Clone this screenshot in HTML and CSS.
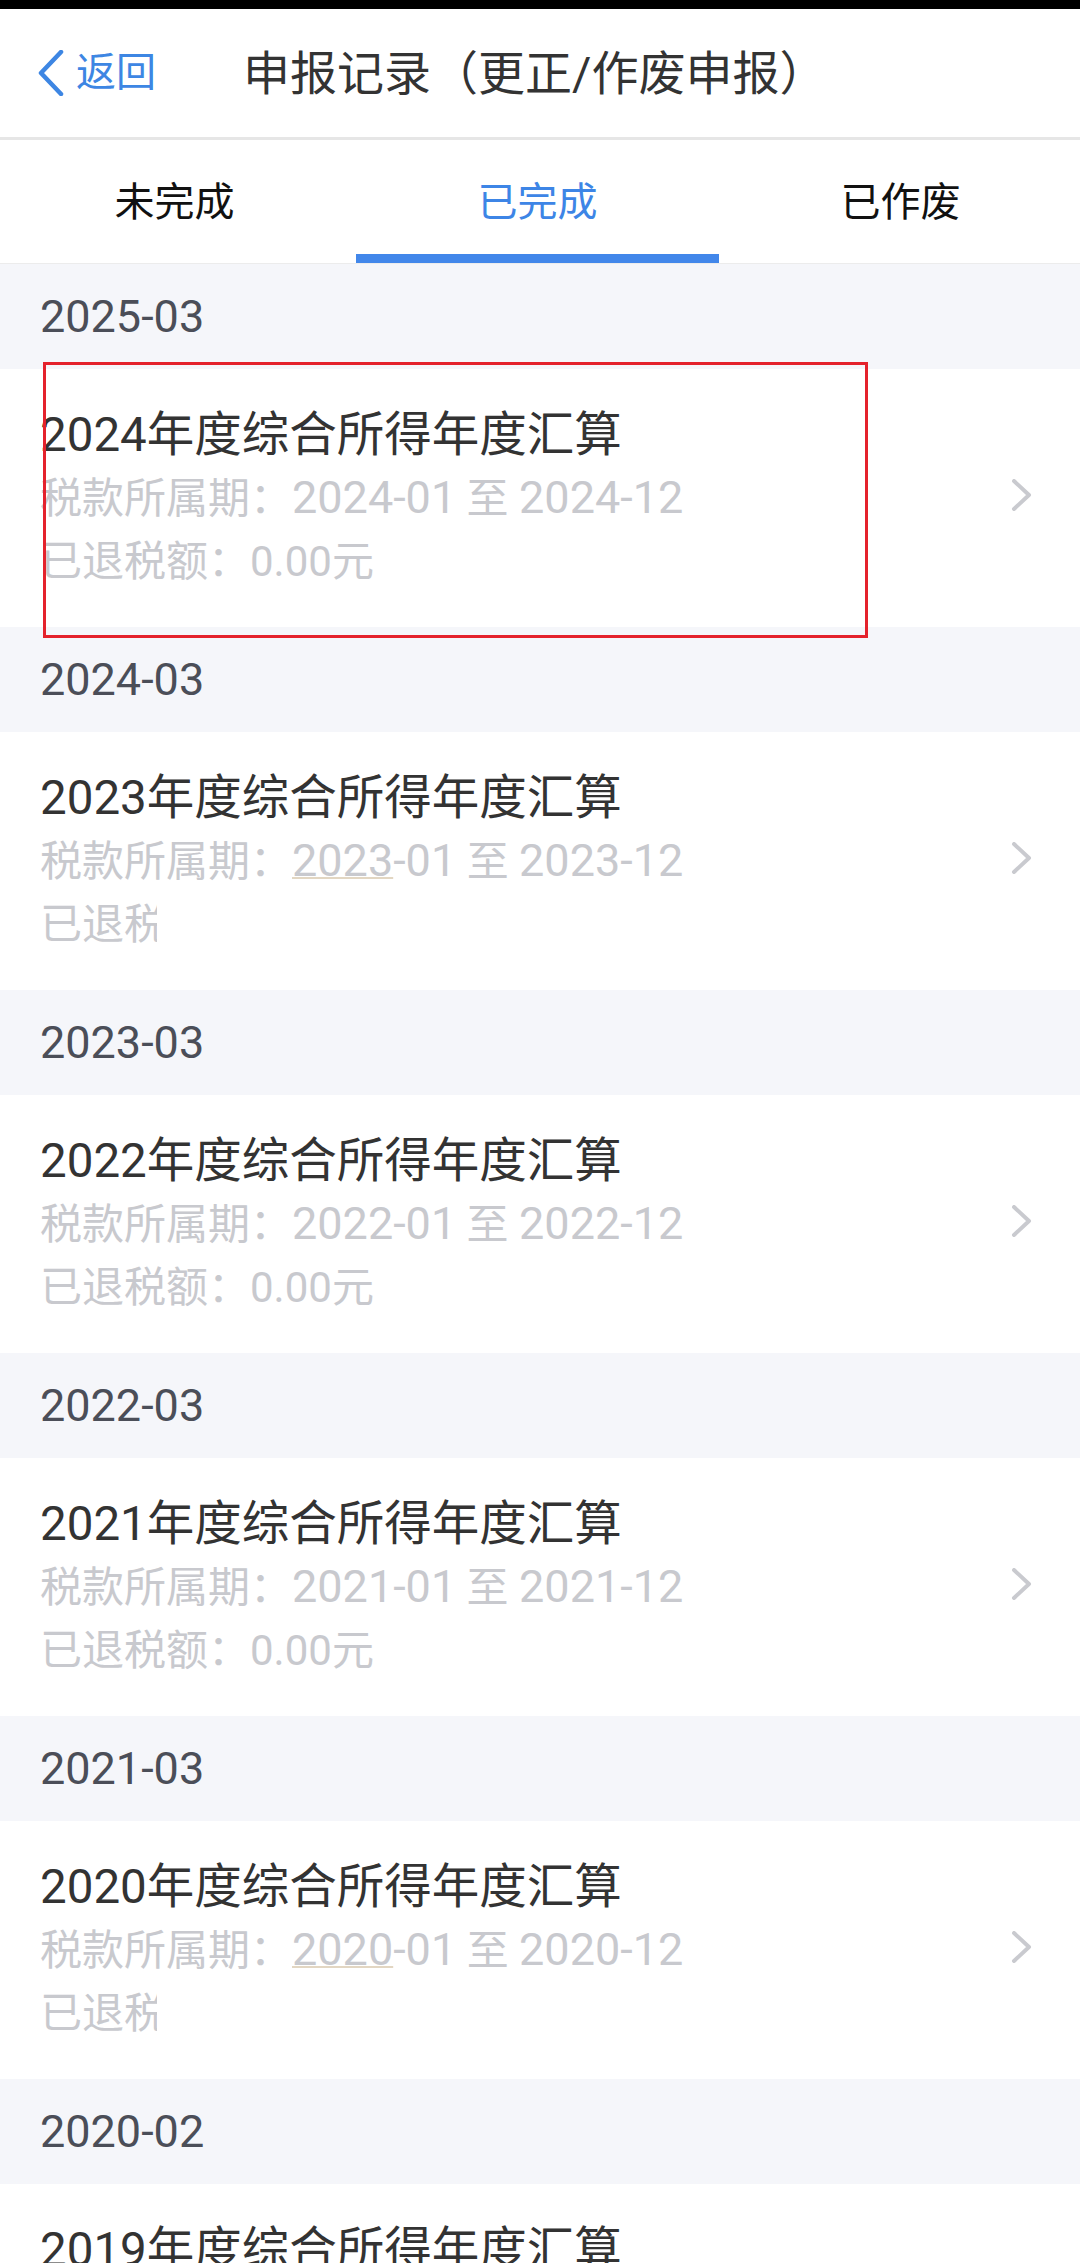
FILE: index.html
```html
<!DOCTYPE html>
<html lang="zh-CN">
<head>
<meta charset="utf-8">
<title>申报记录</title>
<link rel="stylesheet" href="styles.css">
</head>
<body>
<div class="statusbar"></div>
<header class="navbar">
  <a class="back">
    <svg class="back-icon" viewBox="0 0 26 46" aria-hidden="true"><polyline points="23,2 3,23 23,44"/></svg>
    <span>返回</span>
  </a>
  <h1 class="title">申报记录（更正/作废申报）</h1>
</header>
<nav class="tabs">
  <div class="tab">未完成</div>
  <div class="tab active">已完成</div>
  <div class="tab">已作废</div>
</nav>
<main class="list">
  <div class="group-label">2025-03</div>
  <div class="record">
    <div class="record-body">
      <div class="record-title">2024年度综合所得年度汇算</div>
      <div class="record-meta">税款所属期：<span class="period">2024-01</span> 至 <span class="period">2024-12</span></div>
      <div class="record-meta">已退税额：0.00元</div>
    </div>
    <svg class="chevron" viewBox="0 0 22 32" aria-hidden="true"><polyline points="3,2 18,16 3,30"/></svg>
    <div class="annot"></div>
  </div>

  <div class="group-label">2024-03</div>
  <div class="record">
    <div class="record-body">
      <div class="record-title">2023年度综合所得年度汇算</div>
      <div class="record-meta">税款所属期：<span class="period"><span class="smudge">2023</span>-01</span> 至 <span class="period">2023-12</span></div>
      <div class="record-meta"><span class="redacted">已退税额：0.00元</span></div>
    </div>
    <svg class="chevron" viewBox="0 0 22 32" aria-hidden="true"><polyline points="3,2 18,16 3,30"/></svg>
  </div>

  <div class="group-label">2023-03</div>
  <div class="record">
    <div class="record-body">
      <div class="record-title">2022年度综合所得年度汇算</div>
      <div class="record-meta">税款所属期：<span class="period">2022-01</span> 至 <span class="period">2022-12</span></div>
      <div class="record-meta">已退税额：0.00元</div>
    </div>
    <svg class="chevron" viewBox="0 0 22 32" aria-hidden="true"><polyline points="3,2 18,16 3,30"/></svg>
  </div>

  <div class="group-label">2022-03</div>
  <div class="record">
    <div class="record-body">
      <div class="record-title">2021年度综合所得年度汇算</div>
      <div class="record-meta">税款所属期：<span class="period">2021-01</span> 至 <span class="period">2021-12</span></div>
      <div class="record-meta">已退税额：0.00元</div>
    </div>
    <svg class="chevron" viewBox="0 0 22 32" aria-hidden="true"><polyline points="3,2 18,16 3,30"/></svg>
  </div>

  <div class="group-label">2021-03</div>
  <div class="record">
    <div class="record-body">
      <div class="record-title">2020年度综合所得年度汇算</div>
      <div class="record-meta">税款所属期：<span class="period"><span class="smudge">2020</span>-01</span> 至 <span class="period">2020-12</span></div>
      <div class="record-meta"><span class="redacted">已退税额：0.00元</span></div>
    </div>
    <svg class="chevron" viewBox="0 0 22 32" aria-hidden="true"><polyline points="3,2 18,16 3,30"/></svg>
  </div>

  <div class="group-label">2020-02</div>
  <div class="record">
    <div class="record-body">
      <div class="record-title">2019年度综合所得年度汇算</div>
      <div class="record-meta">税款所属期：<span class="period">2019-01</span> 至 <span class="period">2019-12</span></div>
      <div class="record-meta">已退税额：0.00元</div>
    </div>
    <svg class="chevron" viewBox="0 0 22 32" aria-hidden="true"><polyline points="3,2 18,16 3,30"/></svg>
  </div>
</main>
</body>
</html>
```

FILE: styles.css
```css
* {
  box-sizing: border-box;
  margin: 0;
  padding: 0;
}

html,
body {
  width: 1080px;
  height: 2263px;
  overflow: hidden;
  background: #ffffff;
}

body {
  font-family: "Roboto", "Noto Sans CJK SC", sans-serif;
  color: #333333;
}

.statusbar {
  height: 9px;
  background: #000000;
}

.navbar {
  height: 131px;
  display: flex;
  align-items: center;
  padding-left: 38px;
  border-bottom: 3px solid #e6e6e6;
  background: #ffffff;
}

.back {
  display: flex;
  align-items: center;
  gap: 12px;
  color: #3d86e3;
  font-size: 40px;
  line-height: 1;
}

.back-icon {
  width: 26px;
  height: 46px;
  fill: none;
  stroke: #3d86e3;
  stroke-width: 4.5;
  stroke-linecap: round;
  stroke-linejoin: round;
}

.title {
  margin-left: 87px;
  font-size: 47px;
  font-weight: 400;
  color: #333333;
  line-height: 1;
}

.tabs {
  display: grid;
  grid-template-columns: repeat(3, 363px);
  margin-left: -7px;
  width: 1094px;
  border-bottom: 1px solid #ececec;
}

.tab {
  height: 123px;
  display: flex;
  align-items: center;
  justify-content: center;
  padding-top: 4px;
  border-bottom: 9px solid transparent;
  font-size: 40px;
  color: #111111;
}

.tab.active {
  color: #3d85e6;
  border-bottom-color: #4287ea;
}

.group-label {
  height: 105px;
  display: flex;
  align-items: center;
  padding-left: 40px;
  background: #f5f6fa;
  font-size: 45px;
  color: #4b4e58;
}

.record {
  position: relative;
  height: 258px;
  display: flex;
  align-items: center;
  padding: 0 47px 0 40px;
  background: #ffffff;
}

.record-body {
  flex: 1;
  min-width: 0;
}

.record-title {
  font-size: 47.5px;
  line-height: 63px;
  color: #333333;
  white-space: nowrap;
}

.record-meta {
  font-size: 42px;
  line-height: 63px;
  color: #c8c9ce;
  white-space: nowrap;
}

.period {
  font-size: 45px;
  line-height: 1;
}

.chevron {
  width: 22px;
  height: 32px;
  margin-top: -6px;
  fill: none;
  stroke: #c9cacf;
  stroke-width: 4;
  stroke-linecap: round;
  stroke-linejoin: round;
}

.annot {
  position: absolute;
  left: 43px;
  top: -7px;
  width: 825px;
  height: 276px;
  border: 3px solid #e4222c;
  pointer-events: none;
}

.redacted {
  display: inline-block;
  width: 117px;
  overflow: hidden;
  vertical-align: top;
}

.smudge {
  text-decoration: underline;
  text-decoration-color: #e2d6c2;
  text-decoration-thickness: 2px;
  text-underline-offset: 1px;
}
```
